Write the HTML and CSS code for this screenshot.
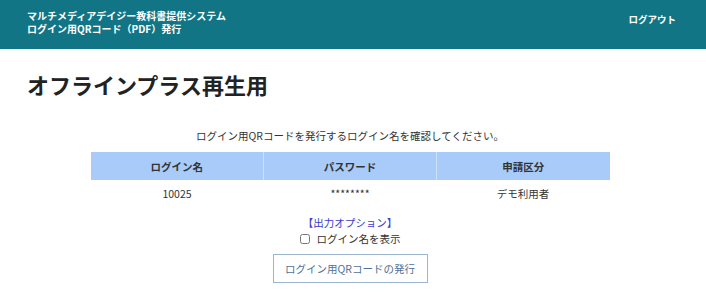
FILE: index.html
```html
<!DOCTYPE html>
<html lang="ja">
<head>
<meta charset="utf-8">
<link rel="stylesheet" href="styles.css">
</head>
<body>
<header class="top">
  <div class="brand">
    <div class="brand-line">マルチメディアデイジー教科書提供システム</div>
    <div class="brand-line">ログイン用QRコード（PDF）発行</div>
  </div>
  <a class="logout" href="#">ログアウト</a>
</header>
<main class="main">
  <h1 class="title">オフラインプラス再生用</h1>
  <p class="lead">ログイン用QRコードを発行するログイン名を確認してください。</p>
  <table class="grid">
    <thead>
      <tr><th>ログイン名</th><th>パスワード</th><th>申請区分</th></tr>
    </thead>
    <tbody>
      <tr><td>10025</td><td>********</td><td>デモ利用者</td></tr>
    </tbody>
  </table>
  <div class="opts">
    <div class="opt-title">【出力オプション】</div>
    <label class="opt"><input type="checkbox" class="chk"> ログイン名を表示</label>
    <button class="btn">ログイン用QRコードの発行</button>
  </div>
</main>
</body>
</html>
```
FILE: styles.css
```css
* { box-sizing: border-box; }
body {
  margin: 0;
  font-family: "Noto Sans CJK JP", "Noto Sans", sans-serif;
  color: #333;
  background: #fff;
}
.top {
  background: #127585;
  height: 49px;
  display: flex;
  justify-content: space-between;
  align-items: flex-start;
  padding: 9px 30px 0 27px;
}
.brand {
  color: #fff;
  font-weight: bold;
  font-size: 10px;
  line-height: 13px;
}
.logout {
  color: #fff;
  font-weight: bold;
  font-size: 9.5px;
  line-height: 12px;
  text-decoration: none;
  margin-top: 4px;
}
.main { padding: 0 33px 0 27px; }
.title {
  margin: 18px 0 0;
  font-size: 22px;
  line-height: 34px;
  font-weight: bold;
  color: #222;
}
.lead {
  text-align: center;
  font-size: 10.5px;
  margin: 27px 0 8px;
  line-height: 16px;
}
.grid {
  margin: 0 auto;
  width: 519px;
  border-collapse: collapse;
  font-size: 10.5px;
}
.grid th {
  background: #a8cbfa;
  height: 28px;
  width: 173px;
  border-left: 1px solid #cde0fc;
  font-weight: bold;
  color: #333;
}
.grid th:first-child { border-left: none; }
.grid td {
  text-align: center;
  height: 27px;
}
.opts {
  display: flex;
  flex-direction: column;
  align-items: center;
  font-size: 10.5px;
  margin-top: 8px;
}
.opt-title { color: #3b3bcc; line-height: 16px; }
.opt { display: flex; align-items: center; line-height: 16px; }
.chk { margin: 0 7px 0 0; width: 10px; height: 10px; }
.btn {
  margin-top: 7px;
  width: 155px;
  height: 29px;
  background: #fff;
  border: 1px solid #9bb5cf;
  color: #4f6f97;
  font-family: inherit;
  font-size: 10.5px;
}
```
